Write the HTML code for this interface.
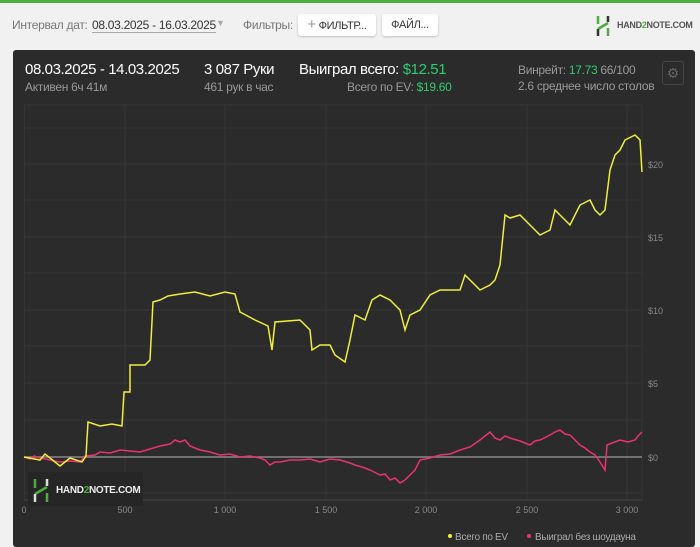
<!DOCTYPE html><html><head><meta charset="utf-8"><style>
body{margin:0;width:700px;height:547px;overflow:hidden;background:#f1f1f1;font-family:"Liberation Sans","Noto Sans CJK SC",sans-serif;position:relative}
.a{position:absolute;white-space:nowrap}
.btn{position:absolute;background:#fff;border-radius:3px;box-shadow:0 1px 2px rgba(0,0,0,.2);font-size:11px;color:#333;height:22px;line-height:22px;top:14px;text-align:center}
.h{font-size:15px;color:#fff;letter-spacing:-0.4px}
.s{font-size:12px;color:#999;letter-spacing:-0.3px}
</style></head><body>
<div class="a" style="left:0;top:0;width:700px;height:3px;background:#4cae3c"></div>
<div class="a" style="left:12px;top:18px;font-size:12px;color:#777;letter-spacing:-0.3px">Интервал дат:</div>
<div class="a" style="left:92px;top:18px;font-size:12px;color:#333;border-bottom:1px solid #aaa;letter-spacing:-0.3px">08.03.2025 - 16.03.2025</div>
<div class="a" style="left:216px;top:18px;font-size:9px;color:#aaa">▼</div>
<div class="a" style="left:243px;top:18px;font-size:12px;color:#777;letter-spacing:-0.3px">Фильтры:</div>
<div class="btn" style="left:298px;width:78px;letter-spacing:-0.3px"><span style="color:#999;font-size:15px">+</span> ФИЛЬТР...</div>
<div class="btn" style="left:382px;width:56px;letter-spacing:-0.3px">ФАЙЛ...</div>
<svg class="a" style="left:596px;top:15px" width="14" height="22"><path d="M2 1v8M12 13v8M2 14l10-6" stroke="#4cae3c" stroke-width="2.5" fill="none"/><path d="M2 14v7M12 1v6" stroke="#333" stroke-width="2.5"/></svg>
<div class="a" style="left:617px;top:20px;font-size:9px;font-weight:bold;color:#555;letter-spacing:-0.3px">HAND<span style="color:#4cae3c">2</span>NOTE.COM</div>
<div class="a" style="left:13px;top:50px;width:682px;height:497px;background:#2b2b2b;border-radius:3px"></div>
<div class="a h" style="left:25px;top:61px">08.03.2025 - 14.03.2025</div>
<div class="a s" style="left:25px;top:80px">Активен 6ч 41м</div>
<div class="a h" style="left:204px;top:61px">3 087 Руки</div>
<div class="a s" style="left:204px;top:80px">461 рук в час</div>
<div class="a h" style="left:299px;top:61px">Выиграл всего: <span style="color:#2ecc71">$12.51</span></div>
<div class="a s" style="left:347px;top:80px">Всего по EV: <span style="color:#2ecc71">$19.60</span></div>
<div class="a s" style="left:518px;top:63px">Винрейт: <span style="color:#2ecc71">17.73</span> 66/100</div>
<div class="a s" style="left:518px;top:79px">2.6 среднее число столов</div>
<div class="a" style="left:662px;top:61px;width:20px;height:22px;border:1px solid #444;border-radius:3px;color:#666;font-size:14px;text-align:center;line-height:22px">⚙</div>
<svg class="a" style="left:0;top:0" width="700" height="547">
<g stroke="#353535" stroke-width="1">
<path d="M24 105H642M24 128H642M24 164H642M24 200H642M24 237H642M24 273H642M24 310H642M24 346H642M24 383H642M24 420H642M24 493H642"/>
<path d="M24.5 105V500M125 105V500M225 105V500M326 105V500M426 105V500M527 105V500M627 105V500M642 105V500"/>
</g>
<path d="M24 500H642" stroke="#444"/>
<path d="M24 457H642" stroke="#888" stroke-width="1.5"/>
<g fill="#888" font-size="9" font-family="Liberation Sans">
<text x="648" y="168">$20</text><text x="648" y="241">$15</text><text x="648" y="314">$10</text><text x="648" y="387">$5</text><text x="648" y="461">$0</text>
<g text-anchor="middle"><text x="24" y="513">0</text><text x="125" y="513">500</text><text x="225" y="513">1 000</text><text x="326" y="513">1 500</text><text x="426" y="513">2 000</text><text x="527" y="513">2 500</text><text x="627" y="513">3 000</text></g>
</g>
<polyline fill="none" stroke="#e8336f" stroke-width="1.5" points="24,457 30,459 34,456 40,458 50,460 60,462 70,461 80,462 85,456 95,455 100,452 110,453 120,450 130,451 140,452 150,449 160,446 170,444 175,440 180,442 185,440 190,446 200,450 210,452 220,455 230,454 240,457 250,456 260,458 265,460 270,465 275,462 280,462 290,460 300,460 310,459 320,462 330,459 340,460 350,463 355,465 365,468 370,470 380,475 385,474 390,480 395,478 400,483 405,480 410,475 415,470 420,460 430,458 440,455 450,454 460,450 470,447 480,440 485,436 490,432 495,438 500,440 505,436 510,438 520,441 530,445 535,441 540,440 550,435 555,432 560,430 565,434 570,435 575,440 580,445 585,448 590,452 595,455 600,462 605,470 607,445 612,443 620,440 628,442 635,440 638,436 642,432"/>
<polyline fill="none" stroke="#f1ee3a" stroke-width="1.5" points="24,457 40,460 45,454 55,462 60,466 70,458 82,462 86,456 88,422 100,426 112,424 122,426 124,392 130,392 130,365 145,365 150,360 153,302 160,300 168,296 180,294 195,292 210,296 225,292 235,294 240,312 255,320 268,326 272,350 275,322 300,320 310,330 312,350 320,345 330,345 335,355 345,362 350,340 355,315 365,320 372,300 380,295 390,300 400,310 405,330 410,315 420,310 430,295 440,290 460,290 465,275 470,280 480,290 490,285 495,280 500,265 505,215 510,218 520,215 530,225 540,235 550,230 555,210 560,215 570,225 580,205 590,200 595,210 600,215 605,210 610,170 615,155 620,150 625,140 635,135 640,140 642,172"/>
<rect x="28" y="472" width="115" height="34" fill="#262626"/>
<path d="M35 479v9M47 493v9M35 494l12-7" stroke="#4cae3c" stroke-width="2.5" fill="none"/><path d="M35 494v8M47 479v7" stroke="#ddd" stroke-width="2.5"/>
<text x="56" y="493" fill="#eee" font-size="10" font-weight="bold" font-family="Liberation Sans" letter-spacing="-0.3">HAND<tspan fill="#4cae3c">2</tspan>NOTE.COM</text>
<circle cx="450" cy="536" r="2" fill="#f1ee3a"/><text x="455" y="540" fill="#aaa" font-size="10" font-family="Liberation Sans" letter-spacing="-0.3">Всего по EV</text>
<circle cx="529" cy="536" r="2" fill="#e8336f"/><text x="535" y="540" fill="#aaa" font-size="10" font-family="Liberation Sans" letter-spacing="-0.3">Выиграл без шоудауна</text>
</svg>
</body></html>
